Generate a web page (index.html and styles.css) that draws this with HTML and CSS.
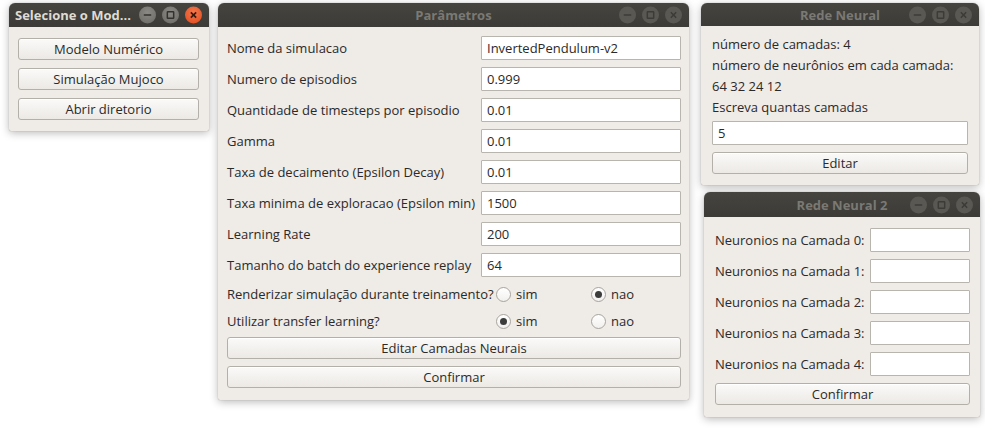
FILE: index.html
```html
<!DOCTYPE html>
<html lang="pt">
<head>
<meta charset="utf-8">
<title>Janelas</title>
<link rel="stylesheet" href="styles.css">
</head>
<body>
<div class="desktop">

  <section class="win win-select active">
    <header class="titlebar left">
      <span class="title">Selecione o Mod...</span>
      <div class="controls">
        <span class="ctl min"><svg viewBox="0 0 16 16"><line x1="4.5" y1="8" x2="11.5" y2="8"/></svg></span>
        <span class="ctl max"><svg viewBox="0 0 16 16"><rect x="5" y="5" width="6" height="6" rx="0.5"/></svg></span>
        <span class="ctl close"><svg viewBox="0 0 16 16"><line x1="5.5" y1="5.5" x2="10.5" y2="10.5"/><line x1="10.5" y1="5.5" x2="5.5" y2="10.5"/></svg></span>
      </div>
    </header>
    <div class="body stack">
      <button class="btn">Modelo Numérico</button>
      <button class="btn">Simulação Mujoco</button>
      <button class="btn">Abrir diretorio</button>
    </div>
  </section>

  <section class="win win-params">
    <header class="titlebar">
      <span class="title">Parâmetros</span>
      <div class="controls">
        <span class="ctl min"><svg viewBox="0 0 16 16"><line x1="4.5" y1="8" x2="11.5" y2="8"/></svg></span>
        <span class="ctl max"><svg viewBox="0 0 16 16"><rect x="5" y="5" width="6" height="6" rx="0.5"/></svg></span>
        <span class="ctl close"><svg viewBox="0 0 16 16"><line x1="5.5" y1="5.5" x2="10.5" y2="10.5"/><line x1="10.5" y1="5.5" x2="5.5" y2="10.5"/></svg></span>
      </div>
    </header>
    <div class="body params">
      <div class="form">
        <label>Nome da simulacao</label><input class="field" value="InvertedPendulum-v2">
        <label>Numero de episodios</label><input class="field" value="0.999">
        <label>Quantidade de timesteps por episodio</label><input class="field" value="0.01">
        <label>Gamma</label><input class="field" value="0.01">
        <label>Taxa de decaimento (Epsilon Decay)</label><input class="field" value="0.01">
        <label>Taxa minima de exploracao (Epsilon min)</label><input class="field" value="1500">
        <label>Learning Rate</label><input class="field" value="200">
        <label>Tamanho do batch do experience replay</label><input class="field" value="64">
      </div>
      <div class="radios">
        <span class="rlabel">Renderizar simulação durante treinamento?</span>
        <span class="opt"><span class="radio"></span>sim</span>
        <span class="opt"><span class="radio on"></span>nao</span>
        <span class="rlabel">Utilizar transfer learning?</span>
        <span class="opt"><span class="radio on"></span>sim</span>
        <span class="opt"><span class="radio"></span>nao</span>
      </div>
      <div class="stack">
        <button class="btn">Editar Camadas Neurais</button>
        <button class="btn">Confirmar</button>
      </div>
    </div>
  </section>

  <section class="win win-rede">
    <header class="titlebar">
      <span class="title">Rede Neural</span>
      <div class="controls">
        <span class="ctl min"><svg viewBox="0 0 16 16"><line x1="4.5" y1="8" x2="11.5" y2="8"/></svg></span>
        <span class="ctl max"><svg viewBox="0 0 16 16"><rect x="5" y="5" width="6" height="6" rx="0.5"/></svg></span>
        <span class="ctl close"><svg viewBox="0 0 16 16"><line x1="5.5" y1="5.5" x2="10.5" y2="10.5"/><line x1="10.5" y1="5.5" x2="5.5" y2="10.5"/></svg></span>
      </div>
    </header>
    <div class="body rede">
      <p class="line">número de camadas: 4</p>
      <p class="line">número de neurônios em cada camada:</p>
      <p class="line">64 32 24 12</p>
      <p class="line">Escreva quantas camadas</p>
      <input class="field wide" value="5">
      <button class="btn">Editar</button>
    </div>
  </section>

  <section class="win win-rede2">
    <header class="titlebar">
      <span class="title">Rede Neural 2</span>
      <div class="controls">
        <span class="ctl min"><svg viewBox="0 0 16 16"><line x1="4.5" y1="8" x2="11.5" y2="8"/></svg></span>
        <span class="ctl max"><svg viewBox="0 0 16 16"><rect x="5" y="5" width="6" height="6" rx="0.5"/></svg></span>
        <span class="ctl close"><svg viewBox="0 0 16 16"><line x1="5.5" y1="5.5" x2="10.5" y2="10.5"/><line x1="10.5" y1="5.5" x2="5.5" y2="10.5"/></svg></span>
      </div>
    </header>
    <div class="body rede2">
      <div class="form2">
        <label>Neuronios na Camada 0:</label><input class="field small">
        <label>Neuronios na Camada 1:</label><input class="field small">
        <label>Neuronios na Camada 2:</label><input class="field small">
        <label>Neuronios na Camada 3:</label><input class="field small">
        <label>Neuronios na Camada 4:</label><input class="field small">
      </div>
      <button class="btn">Confirmar</button>
    </div>
  </section>

</div>
</body>
</html>
```

FILE: styles.css
```css
* { box-sizing: border-box; }

html, body {
  margin: 0;
  padding: 0;
  background: #ffffff;
  width: 985px;
  height: 432px;
  overflow: hidden;
}

body {
  font-family: "Open Sans", "DejaVu Sans", sans-serif;
  font-size: 13px;
  color: #2a2a2a;
}

.desktop {
  position: relative;
  width: 985px;
  height: 432px;
}

.win {
  position: absolute;
  background: #efebe7;
  border-radius: 6px 6px 2px 2px;
  box-shadow: 0 2px 8px rgba(0, 0, 0, 0.28), 0 0 1px rgba(0, 0, 0, 0.35);
  display: flex;
  flex-direction: column;
  overflow: hidden;
}

.win-select { left: 9px; top: 3px; width: 200px; height: 128px; }
.win-params { left: 218px; top: 3px; width: 471px; height: 397px; }
.win-rede { left: 701px; top: 3px; width: 278px; height: 182px; }
.win-rede2 { left: 704px; top: 192px; width: 276px; height: 225px; }

.titlebar {
  height: 24px;
  flex: none;
  background: linear-gradient(#45443f, #3c3b37);
  display: flex;
  align-items: center;
  justify-content: center;
  position: relative;
  padding: 0 6px;
}

.win-rede .titlebar { height: 23px; }
.win-rede2 .titlebar { height: 25px; }

.title {
  font-weight: bold;
  font-size: 13px;
  color: #7a7974;
  white-space: nowrap;
}

.active .title { color: #dfdbd2; }

.titlebar.left { justify-content: flex-start; }

.controls {
  position: absolute;
  right: 7px;
  top: 50%;
  transform: translateY(-50%);
  display: flex;
  gap: 6px;
}

.ctl {
  width: 17px;
  height: 17px;
  border-radius: 50%;
  background: #595853;
  display: block;
}

.ctl svg {
  width: 17px;
  height: 17px;
  display: block;
  fill: none;
  stroke: #3c3b37;
  stroke-width: 1.4;
}

.active .ctl { background: radial-gradient(circle at 50% 35%, #8a8984, #6a6964); }
.active .ctl svg { stroke: #33322e; }
.active .ctl.close { background: radial-gradient(circle at 50% 35%, #f4774b, #e0491c); }
.active .ctl.close svg { stroke: #3a1a0e; stroke-width: 1.6; }

.body {
  flex: 1;
}

.stack {
  display: flex;
  flex-direction: column;
  gap: 8px;
}

.win-select .body {
  padding: 11px 10px 10px 9px;
}

.btn {
  font: inherit;
  color: inherit;
  height: 22px;
  padding: 0;
  border: 1px solid #b3afa9;
  border-radius: 3px;
  background: linear-gradient(#fbfaf9, #ece9e5);
  box-shadow: inset 0 1px 0 #ffffff;
  text-align: center;
  width: 100%;
}

.field {
  font: inherit;
  color: inherit;
  height: 24px;
  border: 1px solid #b8b4ae;
  border-radius: 1px;
  background: #ffffff;
  padding: 0 5px;
  margin: 0;
  outline: none;
}

.params {
  padding: 9px 8px 10px 9px;
  display: flex;
  flex-direction: column;
}

.form {
  display: grid;
  grid-template-columns: 1fr 200px;
  row-gap: 7px;
  align-items: center;
}

.form .field { width: 200px; }

.radios {
  display: grid;
  grid-template-columns: 269px 95px 1fr;
  grid-auto-rows: 22px;
  row-gap: 5px;
  align-items: center;
  margin-top: 6px;
  margin-bottom: 5px;
}

.opt {
  display: flex;
  align-items: center;
  gap: 5px;
}

.radio {
  width: 15px;
  height: 15px;
  border-radius: 50%;
  border: 1px solid #a8a49e;
  background: linear-gradient(#ffffff, #f2f0ee);
  display: inline-flex;
  align-items: center;
  justify-content: center;
}

.radio.on::after {
  content: "";
  width: 7px;
  height: 7px;
  border-radius: 50%;
  background: #3c3c3c;
}

.params .stack { gap: 7px; }

.rede {
  padding: 8px 11px 10px 11px;
  display: flex;
  flex-direction: column;
}

.line {
  margin: 0;
  height: 21px;
  line-height: 21px;
  white-space: nowrap;
}

.field.wide {
  width: 256px;
  margin-top: 3px;
}

.rede .btn { margin-top: 7px; width: 256px; }

.rede2 {
  padding: 11px 10px 10px 11px;
  display: flex;
  flex-direction: column;
}

.form2 {
  display: grid;
  grid-template-columns: 1fr 100px;
  row-gap: 7px;
  align-items: center;
}

.field.small { width: 100px; }

.rede2 .btn { margin-top: 7px; width: 255px; }
```
